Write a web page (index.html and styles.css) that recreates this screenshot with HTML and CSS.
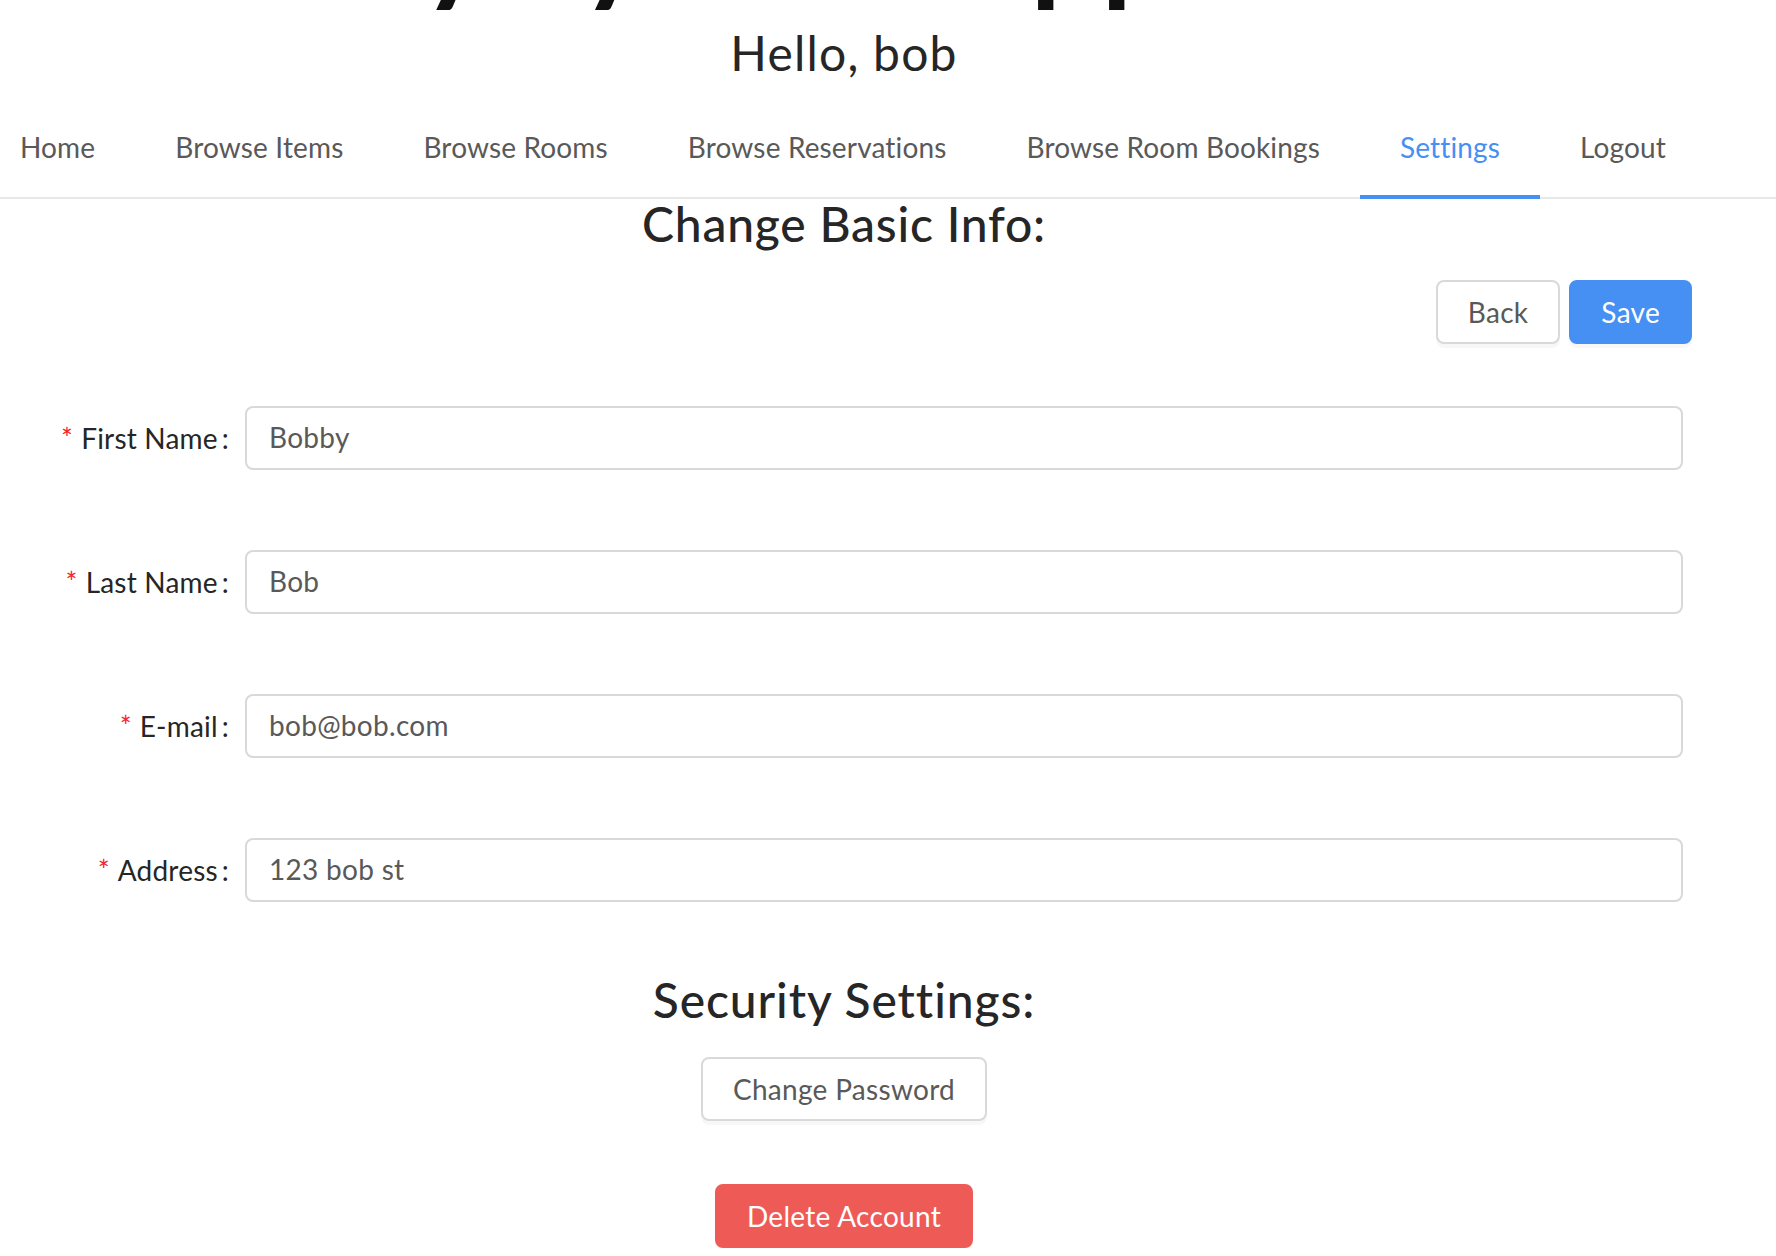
FILE: index.html
```html
<!DOCTYPE html>
<html lang="en">
<head>
<meta charset="utf-8">
<title>Settings</title>
<link rel="stylesheet" href="styles.css">
</head>
<body>
<header class="page-header">
  <h1 class="app-title">Library System App</h1>
  <h2 class="greeting">Hello, bob</h2>
</header>
<nav class="menu">
  <a class="menu-item first">Home</a>
  <a class="menu-item">Browse Items</a>
  <a class="menu-item">Browse Rooms</a>
  <a class="menu-item">Browse Reservations</a>
  <a class="menu-item">Browse Room Bookings</a>
  <a class="menu-item active">Settings</a>
  <a class="menu-item">Logout</a>
</nav>
<main class="content">
  <h3 class="section-title">Change Basic Info:</h3>
  <div class="actions">
    <button class="btn" type="button">Back</button>
    <button class="btn btn-primary" type="button">Save</button>
  </div>
  <form class="form">
    <div class="form-row">
      <label class="form-label"><span class="req">*</span>First Name<span class="colon">:</span></label>
      <input class="input" type="text" value="Bobby">
    </div>
    <div class="form-row">
      <label class="form-label"><span class="req">*</span>Last Name<span class="colon">:</span></label>
      <input class="input" type="text" value="Bob">
    </div>
    <div class="form-row">
      <label class="form-label"><span class="req">*</span>E-mail<span class="colon">:</span></label>
      <input class="input" type="text" value="bob@bob.com">
    </div>
    <div class="form-row">
      <label class="form-label"><span class="req">*</span>Address<span class="colon">:</span></label>
      <input class="input" type="text" value="123 bob st">
    </div>
  </form>
  <h3 class="section-title security">Security Settings:</h3>
  <div class="center-row pw-row">
    <button class="btn" type="button">Change Password</button>
  </div>
  <div class="center-row delete-row">
    <button class="btn btn-danger" type="button">Delete Account</button>
  </div>
</main>
</body>
</html>
```
FILE: styles.css
```css
html, body {
  margin: 0;
  padding: 0;
  background: #fff;
}
body {
  font-family: Lato, "Noto Sans", sans-serif;
  color: #595959;
  overflow: hidden;
}
.page-header {
  width: 1688px;
}
.app-title {
  margin: -121px 0 0;
  padding-left: 98px;
  font-size: 124px;
  line-height: 124px;
  font-weight: 700;
  letter-spacing: 0.5px;
  color: #111;
  white-space: nowrap;
}
.greeting {
  margin: 21px 0 0;
  font-size: 48px;
  line-height: 58px;
  font-weight: 400;
  letter-spacing: 1.2px;
  color: #262626;
  text-align: center;
}
.menu {
  display: flex;
  margin-top: 21px;
  border-bottom: 2px solid #e8e8e8;
}
.menu-item {
  padding: 0 40px 4px;
  line-height: 88px;
  font-size: 28px;
  letter-spacing: 0.15px;
  color: #595959;
  border-bottom: 4px solid transparent;
  margin-bottom: -2px;
  white-space: nowrap;
}
.menu-item.first {
  padding-left: 20px;
}
.menu-item.active {
  color: #4590f2;
  border-bottom-color: #4590f2;
}
.content {
  width: 1688px;
}
.section-title {
  margin: 0;
  font-size: 48px;
  line-height: 50px;
  font-weight: 500;
  letter-spacing: 0.8px;
  color: #262626;
  text-align: center;
}
.section-title.security {
  margin-top: 73px;
  letter-spacing: 0.9px;
}
.actions {
  display: flex;
  justify-content: flex-end;
  gap: 9px;
  margin: 31px -4px 0 0;
}
.btn {
  height: 64px;
  padding: 0 30px;
  font-family: Lato, "Noto Sans", sans-serif;
  font-size: 28px;
  letter-spacing: 0.3px;
  border: 2px solid #d9d9d9;
  border-radius: 8px;
  background: #fff;
  color: #595959;
  box-shadow: 0 4px 0 rgba(0, 0, 0, 0.03);
  white-space: nowrap;
}
.btn-primary {
  background: #4590f2;
  border-color: #4590f2;
  color: #fff;
}
.btn-danger {
  background: #ee5b57;
  border-color: #ee5b57;
  color: #fff;
}
.form {
  margin-top: 62px;
  display: flex;
  flex-direction: column;
  gap: 80px;
}
.form-row {
  display: flex;
  align-items: center;
  height: 64px;
}
.form-label {
  width: 245px;
  flex: none;
  box-sizing: border-box;
  padding-right: 16px;
  text-align: right;
  font-size: 28px;
  line-height: 62px;
  letter-spacing: 0.2px;
  color: #262626;
  white-space: nowrap;
}
.req {
  color: #f5222d;
  margin-right: 8px;
}
.colon {
  margin-left: 4px;
}
.input {
  width: 1438px;
  height: 64px;
  box-sizing: border-box;
  border: 2px solid #d9d9d9;
  border-radius: 8px;
  padding: 0 22px 2px;
  font-family: Lato, "Noto Sans", sans-serif;
  font-size: 28px;
  letter-spacing: 0.3px;
  color: #595959;
  background: #fff;
  outline: none;
}
.center-row {
  display: flex;
  justify-content: center;
}
.pw-row {
  margin-top: 32px;
}
.delete-row {
  margin-top: 63px;
}
```
